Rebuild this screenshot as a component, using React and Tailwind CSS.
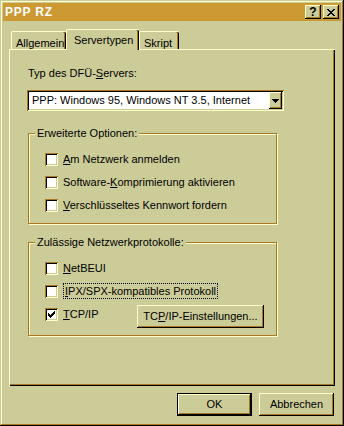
const FACE = "bg-[#cccc99]";

function Raised({ className = "", children }) {
  return (
    <div
      className={`bg-[#cccc99] shadow-[inset_-1px_-1px_#000,inset_1px_1px_#ffffcc,inset_-2px_-2px_#aa7722,inset_2px_2px_#cccc99] ${className}`}
    >
      {children}
    </div>
  );
}

function CheckMark() {
  // classic 7x7 win95 check
  return (
    <svg width="7" height="7" viewBox="0 0 7 7" shapeRendering="crispEdges">
      <path
        d="M6 0h1v3h-1zM5 1h1v3h-1zM4 2h1v3h-1zM3 3h1v3h-1zM2 4h1v3h-1zM1 3h1v3h-1zM0 2h1v3h-1z"
        fill="#000"
      />
    </svg>
  );
}

function Checkbox({ checked }) {
  return (
    <div className="w-[13px] h-[13px] shrink-0 bg-white flex items-center justify-center shadow-[inset_1px_1px_#aa7722,inset_-1px_-1px_#ffffcc,inset_2px_2px_#000,inset_-2px_-2px_#cccc99]">
      {checked && <CheckMark />}
    </div>
  );
}

function Option({ checked, children }) {
  return (
    <div className="h-[13px] flex items-center">
      <Checkbox checked={checked} />
      <span className="ml-[5px] leading-[13px]">{children}</span>
    </div>
  );
}

function Group({ label, className = "", children }) {
  return (
    <div
      className={`relative border border-[#aa7722] shadow-[inset_1px_1px_#ffffcc,1px_1px_#ffffcc] ${className}`}
    >
      <span className="absolute -top-[7px] left-[6px] px-[2px] bg-[#cccc99] leading-[13px]">
        {label}
      </span>
      {children}
    </div>
  );
}

function Tab({ label, active, className = "" }) {
  if (active) {
    return (
      <div
        className={`relative z-10 h-[21px] -mb-[1px] ${FACE} border-t border-l border-[#ffffcc] rounded-tl-[2px] rounded-tr-[2px] shadow-[inset_-1px_0_#000,inset_-2px_0_#aa7722] flex items-start pt-[2px] pl-[7px] ${className}`}
      >
        {label}
      </div>
    );
  }
  return (
    <div
      className={`h-[18px] ${FACE} border-t border-l border-[#ffffcc] rounded-tl-[2px] rounded-tr-[2px] shadow-[inset_-1px_0_#000,inset_-2px_0_#aa7722] flex items-start pt-[3px] pl-[4px] ${className}`}
    >
      {label}
    </div>
  );
}

export default function App() {
  return (
    <div className="w-[344px] h-[426px] bg-[#cccc99] p-[3px] flex flex-col text-[11px] text-black font-['Liberation_Sans',Arial,sans-serif] shadow-[inset_-1px_-1px_#000,inset_1px_1px_#cccc99,inset_-2px_-2px_#aa7722,inset_2px_2px_#ffffcc]">
      {/* title bar */}
      <div className="h-[18px] bg-[#cc9933] flex items-center pl-[2px] pr-[2px]">
        <span className="text-white font-bold text-[12px] tracking-[0.8px]">PPP RZ</span>
        <div className="ml-auto flex gap-[2px]">
          <Raised className="w-[16px] h-[14px] flex items-center justify-center">
            <span className="font-bold text-[12px] leading-none">?</span>
          </Raised>
          <Raised className="w-[16px] h-[14px] flex items-center justify-center">
            <svg width="8" height="7" viewBox="0 0 8 7" shapeRendering="crispEdges">
              <path
                d="M0 0h2v1h-2zM6 0h2v1h-2zM1 1h2v1h-2zM5 1h2v1h-2zM2 2h4v1h-4zM3 3h2v1h-2zM2 4h4v1h-4zM1 5h2v1h-2zM5 5h2v1h-2zM0 6h2v1h-2zM6 6h2v1h-2z"
                fill="#000"
              />
            </svg>
          </Raised>
        </div>
      </div>

      <div className="px-[6px] flex flex-col">
        {/* tabs */}
        <div className="mt-[8px] h-[20px] flex items-end pl-[2px]">
          <Tab label="Allgemein" className="w-[55px]" />
          <Tab label="Servertypen" active className="w-[73px]" />
          <Tab label="Skript" className="w-[40px]" />
        </div>

        {/* panel */}
        <div className="h-[337px] border-t border-l border-[#ffffcc] shadow-[inset_-1px_-1px_#000,inset_-2px_-2px_#aa7722] pl-[17px] pt-[17px] flex flex-col">
          <div className="leading-[13px] pl-[1px]">
            Typ des DFÜ-<u>S</u>ervers:
          </div>

          <div className="mt-[10px] w-[257px] h-[21px] bg-white flex items-center p-[2px] shadow-[inset_1px_1px_#aa7722,inset_-1px_-1px_#ffffcc,inset_2px_2px_#000,inset_-2px_-2px_#cccc99]">
            <span className="pl-[3px] flex-1">PPP: Windows 95, Windows NT 3.5, Internet</span>
            <Raised className="w-[13px] h-[17px] flex items-center justify-center">
              <svg width="7" height="4" viewBox="0 0 7 4" shapeRendering="crispEdges">
                <path d="M0 0h7v1h-7zM1 1h5v1h-5zM2 2h3v1h-3zM3 3h1v1h-1z" fill="#000" />
              </svg>
            </Raised>
          </div>

          <Group label="Erweiterte Optionen:" className="mt-[22px] ml-[1px] w-[249px] h-[91px] pt-[19px] pl-[16px]">
            <div className="flex flex-col gap-[10px]">
              <Option><u>A</u>m Netzwerk anmelden</Option>
              <Option>Software-<u>K</u>omprimierung aktivieren</Option>
              <Option><u>V</u>erschlüsseltes Kennwort fordern</Option>
            </div>
          </Group>

          <Group label="Zulässige Netzwerkprotokolle:" className="mt-[18px] ml-[1px] w-[249px] h-[94px] pt-[19px] pl-[16px] pr-[12px]">
            <div className="flex flex-col gap-[10px]">
              <Option><u>N</u>etBEUI</Option>
              <Option>
                <span className="border border-dotted border-black px-[1px] py-[1px]">
                  <u>I</u>PX/SPX-kompatibles Protokoll
                </span>
              </Option>
              <div className="h-[13px] flex items-center">
                <Checkbox checked />
                <span className="ml-[5px] leading-[13px]"><u>T</u>CP/IP</span>
                <Raised className="ml-auto mt-[3px] w-[127px] h-[23px] shrink-0 flex items-center justify-center">
                  TC<u>P</u>/IP-Einstellungen...
                </Raised>
              </div>
            </div>
          </Group>
        </div>

        {/* buttons */}
        <div className="mt-[7px] flex justify-end gap-[7px] pr-[1px]">
          <div className="w-[75px] h-[23px] border border-black">
            <Raised className="w-full h-full flex items-center justify-center">OK</Raised>
          </div>
          <Raised className="w-[75px] h-[23px] flex items-center justify-center">Abbrechen</Raised>
        </div>
      </div>
    </div>
  );
}
